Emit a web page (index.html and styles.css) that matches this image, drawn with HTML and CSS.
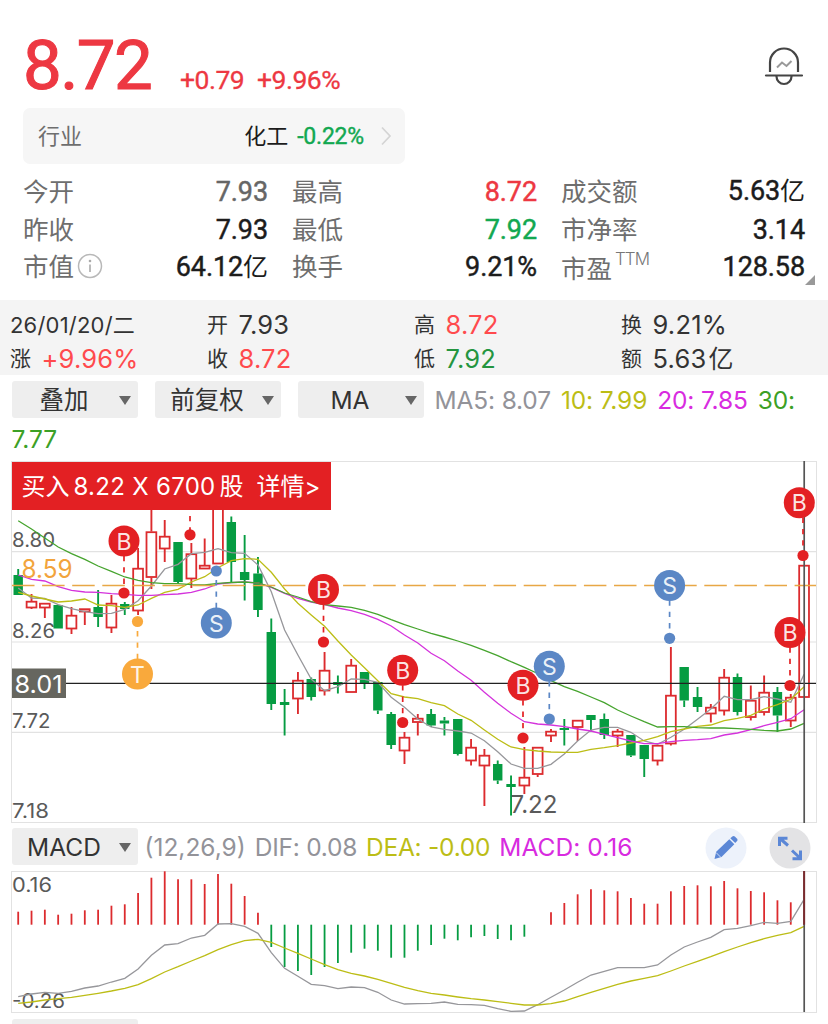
FILE: index.html
```html
<!DOCTYPE html>
<html lang="zh">

<head>
    <meta charset="utf-8">
    <title>8.72</title>
    <link rel="stylesheet" href="styles.css">
</head>

<body>
    <div class="header">
        <div class="price">8.72</div>
        <div class="change">+0.79</div>
        <div class="percent">+9.96%</div>
        <svg class="bell" width="40" height="42" viewBox="0 0 40 42">
            <path d="M6 26V16.500a14 14 0 0 1 28 0V26" fill="none" stroke="#444" stroke-width="2.200" />
            <path d="M2 29.500H38" stroke="#444" stroke-width="2.200" stroke-linecap="round" />
            <path d="M12.500 30v.500a7.500 7.500 0 0 0 15 0V30" fill="none" stroke="#444" stroke-width="2.200" />
            <path d="M13 21.500l5-5 4.500 3.500 5-5" fill="none" stroke="#999" stroke-width="2" />
        </svg>
    </div>

    <div class="industry">
        <span class="industry-label">行业</span>
        <span class="industry-name">化工</span>
        <span class="industry-value">-0.22%</span>
        <svg width="12" height="20" viewBox="0 0 12 20">
            <path d="M2 1.500l8 8.500-8 8.500" fill="none" stroke="#d4d4d4" stroke-width="1.700" />
        </svg>
    </div>

    <div class="quote">
        <div class="item"><span>今开</span><b class="gray">7.93</b></div>
        <div class="item"><span>最高</span><b class="red">8.72</b></div>
        <div class="item"><span>成交额</span><b>5.63<i>亿</i></b></div>
        <div class="item"><span>昨收</span><b>7.93</b></div>
        <div class="item"><span>最低</span><b class="green">7.92</b></div>
        <div class="item"><span>市净率</span><b>3.14</b></div>
        <div class="item">
            <span>市值</span>
            <svg class="info" width="26" height="26" viewBox="0 0 26 26">
                <circle cx="13" cy="13" r="11.500" fill="none" stroke="#b8b8b8" stroke-width="1.500" />
                <path d="M13 11.500V19" stroke="#aaa" stroke-width="1.600" />
                <circle cx="13" cy="8" r="1.300" fill="#aaa" />
            </svg>
            <b>64.12<i>亿</i></b>
        </div>
        <div class="item"><span>换手</span><b>9.21%</b></div>
        <div class="item"><span class="pe">市盈</span><em>TTM</em><b>128.58</b></div>
        <div class="corner"></div>
    </div>

    <div class="summary">
        <div><span class="date">26/01/20/二</span></div>
        <div><span>开</span><b>7.93</b></div>
        <div><span>高</span><b class="up">8.72</b></div>
        <div><span>换</span><b>9.21%</b></div>
        <div><span>涨</span><b class="up">+9.96%</b></div>
        <div><span>收</span><b class="up">8.72</b></div>
        <div><span>低</span><b class="down">7.92</b></div>
        <div><span>额</span><b>5.63<i>亿</i></b></div>
    </div>

    <div class="toolbar">
        <div class="select"><span>叠加</span></div>
        <div class="select"><span>前复权</span></div>
        <div class="select"><span>MA</span></div>
        <div class="legend"><span class="c5">MA5: 8.07</span><span class="c10">10: 7.99</span><span class="c20">20: 7.85</span><span class="c30">30:</span></div>
    </div>
    <div class="legend-more c30">7.77</div>

    <div class="chart">
        <svg id="kline" width="828" height="363" viewBox="0 460 828 363"></svg>
        <div class="trade"><span>买入</span><span class="deal">8.22 X 6700</span><span class="unit">股</span><span class="more">详情&gt;</span></div>
    </div>

    <div class="toolbar macd-bar">
        <div class="select"><span>MACD</span></div>
        <div class="legend macd-legend"><span class="c5">(12,26,9)</span><span class="c5">DIF: 0.08</span><span class="c10">DEA: -0.00</span><span class="c20">MACD: 0.16</span></div>
        <svg class="tool edit" width="42" height="42" viewBox="0 0 42 42">
            <circle cx="21" cy="21" r="20.500" fill="#edf2fb" />
            <path d="M9.500 32l1.700-7.300L24.300 12.300l5 5L16.500 30z" fill="#5b87d6" />
            <path d="M25.300 11.300l2-1.800q1.300-1 2.500 0l2.300 2.200q1.100 1.200 0 2.400l-1.900 2z" fill="#5b87d6" />
            <path d="M11 25.500l5 5" stroke="#edf2fb" stroke-width="0.800" />
        </svg>
        <svg class="tool" width="42" height="42" viewBox="0 0 42 42">
            <circle cx="21" cy="21" r="20.500" fill="#e3e3e5" />
            <path d="M19 18.500L11 11.500M10.500 19V11.300H18.500M23 23.500l8 7.500M23.500 31.700H31.500V23.500" fill="none" stroke="#5b87d6" stroke-width="3" />
        </svg>
    </div>

    <svg id="macd" width="828" height="143" viewBox="0 870 828 143"></svg>
    <div class="next"></div>

    <script src="script.js"></script>
</body>

</html>
```
FILE: styles.css
```css
body {
    margin: 0;
    width: 828px;
    height: 1024px;
    overflow: hidden;
    background: #fff;
    color: #333;
    font-family: Inter, "Noto Sans CJK SC", sans-serif;
}

b, i, em {
    font-weight: inherit;
    font-style: normal;
}

svg {
    display: block;
}

.header {
    height: 108px;
    box-sizing: border-box;
    padding: 0 23px;
    display: flex;
    align-items: baseline;
    color: #ed3842;
    font-family: Roboto, sans-serif;
}

.price {
    width: 157px;
    line-height: 132px;
    font-size: 69px;
    letter-spacing: -1.6px;
    -webkit-text-stroke: 1.1px #ed3842;
}

.change,
.percent {
    font-size: 26.5px;
    letter-spacing: -0.5px;
    -webkit-text-stroke: 0.3px #ed3842;
}

.change {
    width: 77px;
}

.bell {
    align-self: flex-start;
    margin: 46px 1px 0 auto;
}

.industry {
    display: flex;
    align-items: center;
    width: 382px;
    height: 56px;
    margin-left: 23px;
    padding: 0 13px 0 15px;
    box-sizing: border-box;
    border-radius: 7px;
    background: #f6f6f6;
    font-size: 22px;
    line-height: 30px;
}

.industry-label {
    flex: 1;
    color: #6e6e6e;
}

.industry-name {
    color: #1c1c1c;
}

.industry-value {
    margin: 0 16px 0 9px;
    color: #12a851;
    font: 400 23px Roboto, sans-serif;
    letter-spacing: -0.2px;
    -webkit-text-stroke: 0.4px #12a851;
}

.quote {
    position: relative;
    display: grid;
    grid-template-columns: 245px 245px 244px;
    grid-template-rows: repeat(3, 37.7px);
    column-gap: 24px;
    height: 128px;
    padding: 8px 0 0 23px;
    font-size: 25.5px;
}

.item {
    display: flex;
    align-items: center;
}

.item span {
    padding-bottom: 3px;
    color: #6e6e6e;
}

.item .pe {
    padding-bottom: 0;
}

.item b {
    margin-left: auto;
    padding-top: 2px;
    color: #1c1c1c;
    font: 400 27px Roboto, "Noto Sans CJK SC", sans-serif;
    line-height: 36px;
    letter-spacing: -0.1px;
    -webkit-text-stroke: 0.45px;
}

.item i {
    font-size: 25px;
    -webkit-text-stroke: 0;
}

.item em {
    align-self: flex-start;
    margin: 2px 0 0 3px;
    color: #777;
    font: 300 17px Inter, sans-serif;
    letter-spacing: -1px;
}

.info {
    margin: -1px 0 0 3px;
}

.item .gray {
    color: #666;
}

.item .red {
    color: #ed3842;
}

.item .green {
    color: #12a851;
}

.corner {
    position: absolute;
    right: 13px;
    bottom: 15px;
    border-left: 10px solid transparent;
    border-bottom: 10px solid #999;
}

.summary {
    display: grid;
    grid-template-columns: 207px 207px 207px 207px;
    grid-template-rows: 34px 34px;
    height: 67px;
    padding-top: 8px;
    background: #f4f4f4;
    font-size: 21px;
}

.summary div {
    display: flex;
    align-items: center;
    line-height: 30px;
}

.summary div:nth-child(4n+1) {
    padding-left: 10px;
}

.summary span {
    padding-bottom: 1px;
}

.summary .date {
    padding-bottom: 0;
    font-size: 22px;
    letter-spacing: 0.2px;
}

.summary b {
    margin-left: 10.5px;
    font-size: 25.5px;
    letter-spacing: 0.2px;
}

.summary i {
    margin-left: 2px;
    font-size: 25px;
}

.up {
    color: #ff4a4d;
}

.down {
    color: #24953f;
}

.toolbar {
    display: flex;
    height: 37px;
    margin: 6px 0 0 11.5px;
}

.select {
    display: flex;
    align-items: center;
    width: 126px;
    height: 37px;
    margin-right: 17px;
    border-radius: 3px;
    background: #eee;
    font-size: 24.5px;
    line-height: 34px;
    color: #333;
}

.select span {
    flex: 1;
    padding: 1px 2px 0 0;
    text-align: center;
}

.select::after {
    content: "";
    margin: 2px 7px 0 0;
    border: 6px solid transparent;
    border-top: 9px solid #666;
    border-bottom: 0;
}

.legend {
    display: flex;
    gap: 10px;
    margin-left: -6px;
    font-size: 24.5px;
    line-height: 38px;
    letter-spacing: -0.15px;
    white-space: nowrap;
}

.legend-more {
    height: 42px;
    padding-left: 11.5px;
    font-size: 24.5px;
    line-height: 43px;
}

.c5 {
    color: #939399;
}

.c10 {
    color: #bcbd16;
}

.c20 {
    color: #d82be0;
}

.c30 {
    color: #3ca026;
}

.chart {
    position: relative;
}

/* trade tip lies over the top left of the chart */
.trade {
    position: absolute;
    left: 12px;
    top: 2px;
    display: flex;
    align-items: center;
    width: 319px;
    height: 48px;
    padding: 1px 0 0 9.5px;
    box-sizing: border-box;
    background: #e32023;
    color: #fff;
    font-size: 24px;
    line-height: 34px;
    white-space: nowrap;
}

.deal {
    margin-left: 4px;
    letter-spacing: 0.3px;
}

.unit {
    margin-left: 4px;
}

.more {
    margin-left: 13px;
}

.macd-bar {
    height: 42px;
    margin-top: 5px;
}

.macd-legend {
    gap: 9px;
    margin-left: -10px;
    line-height: 39px;
    letter-spacing: -0.25px;
}

.macd-legend .c5:first-child {
    letter-spacing: 0;
}

.macd-legend .c20 {
    letter-spacing: 0.05px;
}

.tool {
    margin: -1px 0 0 22px;
}

.tool.edit {
    margin-left: auto;
}

.macd-bar .tool:last-child {
    margin-right: 17px;
}

.next {
    width: 126px;
    height: 20px;
    margin: 6px 0 0 11.5px;
    border-radius: 3px;
    background: #eee;
}

svg text {
    font-family: Inter, sans-serif;
}
```
FILE: script.js
```js
const RED = "#dc2b2e";
const GREEN = "#069c42";

const kline = document.querySelector("#kline");
const macd = document.querySelector("#macd");

function add(parent, tag, attrs, text) {
    const el = document.createElementNS("http://www.w3.org/2000/svg", tag);
    for (const key in attrs) {
        el.setAttribute(key, attrs[key]);
    }
    if (text) {
        el.textContent = text;
    }
    parent.appendChild(el);
}

function xOf(i) {
    return 18.2 + i * 13.32;
}

function line(parent, x1, y1, x2, y2, color, width, dash) {
    add(parent, "path", { d: `M${x1} ${y1}L${x2} ${y2}`, stroke: color, "stroke-width": width, "stroke-dasharray": dash || "none" });
}

function curve(parent, ys, color) {
    const points = ys.map((y, i) => xOf(i).toFixed(1) + "," + y).join(" ");
    add(parent, "polyline", { points: points, fill: "none", stroke: color, "stroke-width": 1.3 });
}

function label(parent, text, x, y, size, width, color) {
    add(parent, "text", { x: x, y: y, "font-size": size, fill: color, textLength: width, lengthAdjust: "spacingAndGlyphs" }, text);
}

// up/down, high, body top, body bottom, low
const candles = [
    [0, 569, 575, 595, 595], [1, 594, 601, 608, 609], [1, 603, 603, 608, 618], [0, 605, 605, 628.5, 628.5],
    [1, 607, 615, 629, 634], [1, 608.5, 608.5, 612, 625], [0, 590, 607, 617, 627], [1, 595, 603, 628, 633],
    [0, 602, 604, 609, 615], [1, 548, 568, 611, 615], [1, 505, 531.5, 577.5, 589], [1, 520, 536, 549, 562],
    [0, 542, 542, 582, 584], [1, 543, 553.5, 579, 588], [1, 538.5, 565, 569, 569], [1, 490, 500, 564, 564],
    [0, 516.5, 522, 562, 583], [0, 535, 572, 580, 600.5], [0, 557, 573.5, 610, 617], [0, 618.5, 632, 704, 710],
    [0, 689, 702, 705, 735.5], [1, 672, 680, 699, 714], [0, 677.5, 679, 697, 700.5], [1, 652, 670, 691, 695.5],
    [0, 675.5, 682, 685, 693.5], [1, 659, 665, 692.5, 692.5], [0, 672, 672, 684, 689], [0, 682, 682, 710.5, 714],
    [0, 712, 714, 745, 749], [1, 732, 737, 751, 764], [1, 714, 718, 722.5, 735.5], [0, 709, 714, 725.5, 727],
    [0, 717, 720.5, 723.5, 735.5], [0, 719, 719, 754, 755.5], [1, 739, 747, 761, 765.5], [1, 749, 755, 766, 806],
    [0, 760.5, 764, 780.5, 784], [0, 775.5, 784, 787, 815.5], [1, 747, 777, 786, 794], [1, 747, 747, 774.5, 777],
    [1, 729, 731, 736, 742], [0, 719, 728, 730, 745.5], [1, 720, 720, 727.5, 741], [0, 715, 715, 720, 731.5],
    [0, 713.5, 719, 735, 739], [1, 729, 731, 736, 747], [0, 735, 735, 755.5, 757], [0, 745, 745, 759, 777],
    [1, 745, 745, 761, 765.5], [1, 647, 695, 744, 745.5], [0, 667, 667, 700.5, 707], [0, 687, 697, 707, 712],
    [1, 704, 707, 714, 722.5], [1, 669, 677, 711, 715.5], [0, 673.5, 677, 712, 715.5], [1, 685.5, 700, 717.5, 720.5],
    [1, 675.5, 692, 712.5, 715.5], [0, 687, 692, 715.5, 732], [1, 694, 697, 721, 727], [1, 565, 565, 697.5, 697.5]
];

const ma5 = [588, 598, 598.5, 604.7, 608.7, 611.7, 613.7, 613.3, 609.3, 600.7, 586, 569, 564.3, 553.7, 552.3, 548.7, 552.7, 553.3, 565, 591.7,
    630, 655, 679, 690.7, 686.7, 679, 679.3, 682.3, 697.3, 707.3, 719, 727, 729.3, 731, 733, 740.7, 751.7, 764, 768.3, 768.3,
    764.3, 754, 741, 730, 727.3, 727.3, 732.3, 741, 744.3, 737.3, 729.3, 719.3, 709, 696.3, 699.7, 699.7, 696.7, 699, 702.3, 674.3];
const ma10 = [592.3, 596, 599, 602, 601, 599, 605, 605.7, 607.3, 605, 598.3, 592.3, 589.3, 582, 576.7, 567.7, 560.7, 558.7, 559.3, 572.3,
    589, 603.3, 615, 626.3, 641, 655, 667.7, 680.7, 693.7, 697, 698.7, 702.7, 705.7, 714, 720.3, 730, 739.3, 747, 749.7, 751,
    752, 752.3, 752.3, 749.3, 747.7, 745.7, 743, 740.3, 736.7, 731.7, 729, 726.3, 725, 720.7, 718.3, 715.3, 709, 704.7, 699.3, 686.7];
const ma20 = [575, 579.3, 581, 586.7, 590.3, 592, 592.3, 593.7, 594.3, 595.3, 595.3, 594.7, 594, 592.3, 589, 584, 582.7, 582, 583, 587.3,
    593.3, 598.3, 602, 604.7, 608, 610.7, 614.3, 619.3, 626, 635, 643, 653.3, 660.7, 671, 680.3, 692.3, 703.3, 713.3, 721.7, 724,
    725, 726.7, 729, 731, 734.3, 737.7, 741, 743.7, 743.7, 741.7, 740.3, 739.7, 738.7, 735, 733, 729.7, 725.7, 722.3, 718.7, 709.7];
const ma30 = [520.7, 529, 538, 547, 553.7, 559.3, 566, 571.3, 577, 580.3, 582.7, 583.7, 583.7, 584.7, 585, 583.3, 582.5, 582, 583, 587,
    593, 597, 601.7, 604.7, 606, 607.3, 610.3, 614.3, 619.7, 624.7, 629, 633.3, 637, 641, 645.3, 650.3, 655.7, 661.7, 667.3, 673.5,
    680.7, 686.7, 691.3, 697, 702.7, 710, 716, 721.7, 727, 726.7, 726.7, 727.7, 728, 728, 728.7, 729.3, 730.3, 731, 729, 723.3];

const bars = [911.7, 910.7, 909.7, 914.7, 913.7, 910.3, 909.7, 905.7, 904.3, 893, 877.7, 871.3, 879.3, 879.3, 884, 874, 883.7, 896, 912.7, 947,
    967, 971, 975, 967, 963, 952.7, 948.7, 950.7, 957.7, 957.7, 950.7, 945, 938.7, 940.3, 937.3, 936, 939, 940.3, 936.7, 924.7,
    912.3, 903, 894.3, 889.3, 890.3, 891.3, 898, 903.7, 903.7, 891.3, 886, 885.3, 886.3, 881, 888.3, 891, 892.3, 900.3, 902.3, 871.3];
const dif = [996.7, 994, 992.3, 993.3, 991.3, 988, 986, 982, 978.3, 969, 955.3, 945, 943.7, 938, 935.3, 924, 923.7, 926.3, 933.3, 952.7,
    968.3, 976.3, 984.3, 985.7, 988.7, 987, 987.7, 992.3, 1000, 1004, 1003.7, 1003.3, 1002, 1004.3, 1004.7, 1005.3, 1008.7, 1011.3, 1011, 1004.7,
    997.3, 990, 982.3, 975, 971.3, 967.7, 967.7, 967.7, 965, 955, 947, 942, 937.3, 929.7, 928.3, 925.7, 922.3, 923.3, 921.3, 899.3];
const dea = [1003.3, 1002, 1000, 998.7, 997.3, 995.3, 993.3, 991, 988.3, 984.7, 978.7, 972, 966.7, 961, 955.7, 949.7, 944.7, 940.7, 939.3, 942.3,
    948, 953.3, 959, 964.7, 969.7, 973.3, 976, 979.3, 983.3, 987.3, 990.7, 993.3, 995, 997, 998.7, 1000, 1001.7, 1003.3, 1005, 1005,
    1003.7, 1001, 996.7, 992.3, 988.3, 984.3, 981, 978.3, 975.7, 971, 966, 961.3, 956.7, 951.7, 947, 942.7, 938.7, 935.3, 932.7, 926.3];

// letter, badge x, badge y, dot x, dot y
const marks = [
    ["B", 124, 541, 124, 593], ["T", 137.5, 674, 137.5, 621.5], ["S", 216.3, 623, 216.3, 571],
    ["B", 323.5, 589.5, 323.5, 642], ["B", 402.7, 670.3, 402.7, 722.5], ["B", 523, 685.3, 523, 738],
    ["S", 549.3, 666.3, 549.3, 719], ["S", 669.6, 585.5, 669.6, 638.3], ["B", 790, 632.5, 790, 685.5],
    ["B", 799.3, 502.7, 803, 555.5]
];
const markColor = { B: "#e32023", S: "#5b87c5", T: "#f9a93c" };

// grid
add(kline, "rect", { x: 11.5, y: 461.5, width: 805, height: 361, fill: "none", stroke: "#e2e2e2" });
[551.7, 642, 732.3].forEach(y => line(kline, 12, y, 816, y, "#e2e2e2", 1.2));

label(kline, "8.80", 12, 547, 20, 43, "#5a5a5a");
label(kline, "8.26", 12, 637.5, 20, 43, "#5a5a5a");
label(kline, "7.72", 12, 728, 20, 38.5, "#5a5a5a");
label(kline, "7.18", 12, 818, 20, 37, "#5a5a5a");

candles.forEach((c, i) => {
    const [up, high, top, bottom, low] = c;
    const x = xOf(i);
    const color = up ? RED : GREEN;
    if (high < top) line(kline, x, high, x, top, color, 1.9);
    if (low > bottom) line(kline, x, bottom, x, low, color, 1.9);
    if (up) {
        add(kline, "rect", { x: x - 4.9, y: top + 0.7, width: 9.8, height: bottom - top - 1.2, fill: "#fff", stroke: color, "stroke-width": 1.8 });
    } else {
        add(kline, "rect", { x: x - 4.7, y: top, width: 9.4, height: bottom - top, fill: color });
    }
});

curve(kline, ma5, "#97979b");
curve(kline, ma10, "#bcbd16");
curve(kline, ma20, "#d433dc");
curve(kline, ma30, "#46a42e");

// cost line and crosshair
line(kline, 12, 585.5, 816, 585.5, "#e8a746", 1.5, "22.5 7.6");
label(kline, "8.59", 21.5, 578, 25, 51, "#f2a43c");
line(kline, 12, 683.4, 816, 683.4, "#222", 1.3);
line(kline, 804.2, 461, 804.2, 823, "#555", 1.7);

line(kline, 190, 516, 190, 535, markColor.B, 1.7, "5.3 6");
add(kline, "circle", { cx: 190, cy: 534.8, r: 5.6, fill: markColor.B });

marks.forEach(m => {
    const [letter, x, y, dotX, dotY] = m;
    const color = markColor[letter];
    const dir = dotY > y ? 1 : -1;
    line(kline, dotX, y + 15 * dir, dotX, dotY, color, 1.7, "5.3 6");
    add(kline, "circle", { cx: dotX, cy: dotY, r: 5.6, fill: color });
    add(kline, "circle", { cx: x, cy: y, r: 15.5, fill: color });
    add(kline, "text", { x: x, y: y + 8.5, "font-size": 23, fill: "#fff", "fill-opacity": 0.9, "text-anchor": "middle" }, letter);
});

add(kline, "rect", { x: 12, y: 668.5, width: 54, height: 29.5, fill: "#66665f" });
label(kline, "8.01", 14.5, 692.5, 24.5, 48, "#fff");
label(kline, "7.22", 510.5, 813, 24, 47, "#5a5a5a");

// macd
add(macd, "rect", { x: 11.5, y: 871.5, width: 805, height: 141, fill: "none", stroke: "#e2e2e2" });
label(macd, "0.16", 12, 891.5, 20, 40, "#5a5a5a");
label(macd, "-0.26", 12, 1008, 20, 53, "#5a5a5a");
bars.forEach((y, i) => {
    if (y !== 924.7) line(macd, xOf(i), 924.7, xOf(i), y, y < 924.7 ? RED : GREEN, 1.8);
});
curve(macd, dif, "#97979b");
curve(macd, dea, "#bcbd16");
line(macd, 804.2, 871, 804.2, 1012, "#555", 1.7);
line(macd, 804.2, 871, 804.2, 924.7, "#7a2b2e", 1.8);
```
